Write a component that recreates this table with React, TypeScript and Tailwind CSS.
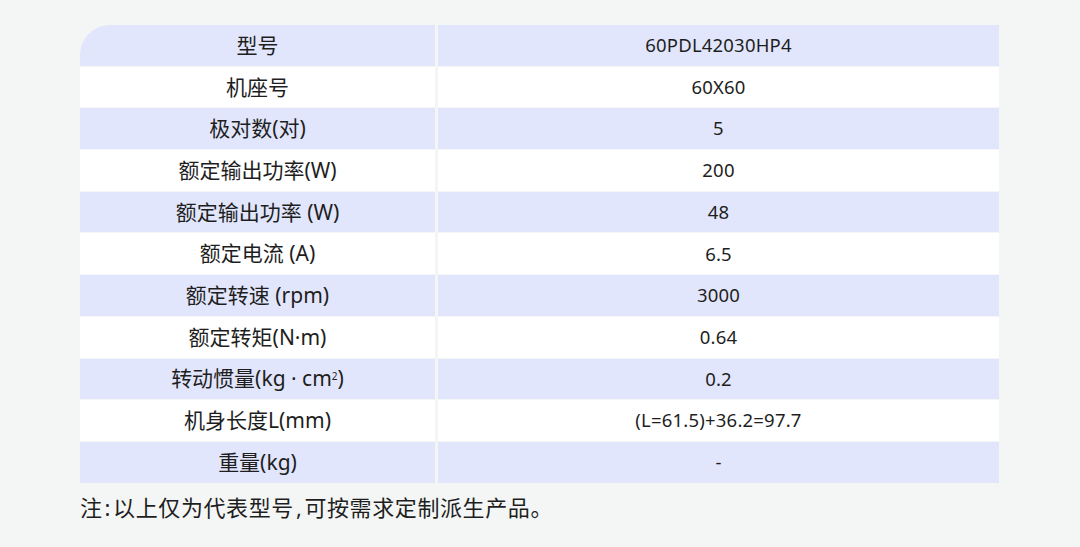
import React from "react";

const rows: { label: React.ReactNode; value: string }[] = [
  { label: "型号", value: "60PDL42030HP4" },
  { label: "机座号", value: "60X60" },
  { label: "极对数(对)", value: "5" },
  { label: "额定输出功率(W)", value: "200" },
  { label: "额定输出功率 (W)", value: "48" },
  { label: "额定电流 (A)", value: "6.5" },
  { label: "额定转速 (rpm)", value: "3000" },
  { label: "额定转矩(N·m)", value: "0.64" },
  {
    label: (
      <>
        转动惯量(kg · cm<sup className="text-[10px] relative -top-[3px]">2</sup>)
      </>
    ),
    value: "0.2",
  },
  { label: "机身长度L(mm)", value: "(L=61.5)+36.2=97.7" },
  { label: "重量(kg)", value: "-" },
];

export default function App() {
  return (
    <div
      className="w-[1080px] h-[547px] bg-[#f4f6f5] pt-[25px] px-[80px] text-[#1e1e1e]"
      style={{ fontFamily: '"Noto Sans", "Noto Sans CJK SC", sans-serif' }}
    >
      <div className="w-[919px] flex flex-col gap-px rounded-tl-[30px] overflow-hidden">
        {rows.map((r, i) => {
          const bg = i % 2 === 0 ? "bg-[#e2e6fc]" : "bg-white";
          return (
            <div key={i} className="flex h-[40.7px] gap-[3px]">
              <div className={`${bg} w-[355px] flex items-center justify-center text-[21px] leading-none`}>
                {r.label}
              </div>
              <div className={`${bg} flex-1 flex items-center justify-center text-[18.5px] leading-none tracking-[0.2px]`}>
                {r.value}
              </div>
            </div>
          );
        })}
      </div>
      <div className="mt-[13px] text-[22px] leading-none tracking-[0.6px]">
        注<span className="mx-[2px]">:</span>以上仅为代表型号<span className="mx-[2px]">,</span>可按需求定制派生产品。
      </div>
    </div>
  );
}
